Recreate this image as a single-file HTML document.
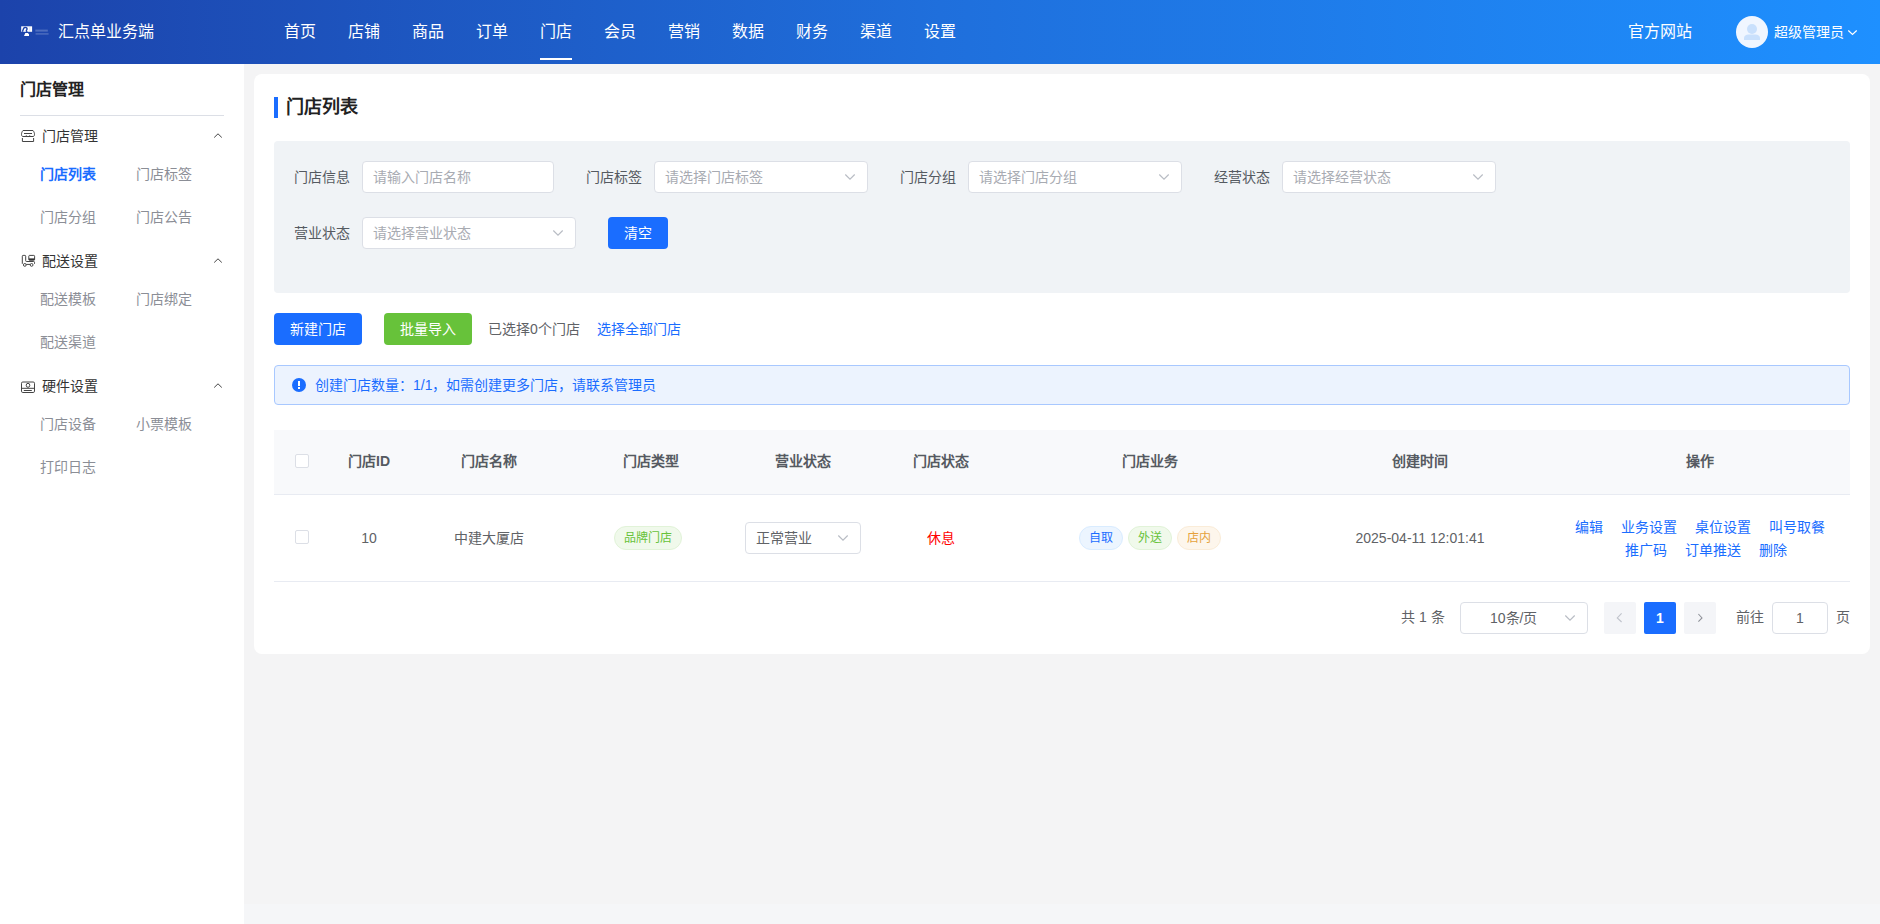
<!DOCTYPE html>
<html lang="zh-CN">
<head>
<meta charset="utf-8">
<style>
*{box-sizing:border-box;margin:0;padding:0;}
html,body{width:1880px;height:924px;overflow:hidden;}
body{font-family:"Liberation Sans",sans-serif;background:#f4f4f5;position:relative;color:#333;font-size:14px;}
.a{position:absolute;white-space:nowrap;}
/* header */
#hd{position:absolute;left:0;top:0;width:1880px;height:64px;background:linear-gradient(90deg,#1c43ab 0%,#1f6fdc 50%,#1e90ff 100%);}
#hd .t{color:#fff;font-size:16px;line-height:20px;}
.nav{top:22px;}
/* sidebar */
#sb{position:absolute;left:0;top:64px;width:244px;height:860px;background:#fff;}
.sbi{font-size:14px;line-height:20px;color:#8b8e96;}
.sbg{font-size:14px;line-height:20px;color:#333;}
/* card */
#card{position:absolute;left:254px;top:74px;width:1616px;height:580px;background:#fff;border-radius:8px;}
.lbl{font-size:14px;line-height:20px;color:#555a61;}
.inp{position:absolute;height:32px;background:#fff;border:1px solid #dcdfe6;border-radius:4px;}
.ph{position:absolute;left:10px;top:5px;font-size:14px;line-height:20px;color:#a8abb2;white-space:nowrap;}
.chev{position:absolute;width:7px;height:7px;border-right:1px solid #a8abb2;border-bottom:1px solid #a8abb2;transform:rotate(45deg);}
.btn{position:absolute;height:32px;border-radius:4px;color:#fff;font-size:14px;line-height:32px;text-align:center;}
.th{font-size:14px;line-height:20px;color:#555a61;font-weight:bold;}
.cb{position:absolute;width:14px;height:14px;border:1px solid #dcdfe6;border-radius:2px;background:#fff;}
.tag{position:absolute;height:24px;border-radius:12px;font-size:12px;line-height:22px;text-align:center;border:1px solid;}
.lnk{color:#1a6dff;font-size:14px;line-height:20px;}
</style>
</head>
<body>
<div id="hd">
  <div class="a t" style="left:58px;top:22px;">汇点单业务端</div>
  <div class="a t nav" style="left:284px;">首页</div>
  <div class="a t nav" style="left:348px;">店铺</div>
  <div class="a t nav" style="left:412px;">商品</div>
  <div class="a t nav" style="left:476px;">订单</div>
  <div class="a t nav" style="left:540px;">门店</div>
  <div class="a" style="left:540px;top:58px;width:32px;height:2px;background:#fff;"></div>
  <div class="a t nav" style="left:604px;">会员</div>
  <div class="a t nav" style="left:668px;">营销</div>
  <div class="a t nav" style="left:732px;">数据</div>
  <div class="a t nav" style="left:796px;">财务</div>
  <div class="a t nav" style="left:860px;">渠道</div>
  <div class="a t nav" style="left:924px;">设置</div>
  <div class="a t nav" style="left:1628px;">官方网站</div>
  <div class="a" style="left:1736px;top:16px;width:32px;height:32px;border-radius:50%;background:#f0f6ff;"></div>
  <div class="a t" style="left:1774px;top:22px;font-size:14px;">超级管理员</div>
</div>

<div class="a" style="left:244px;top:904px;width:1636px;height:20px;background:#f5f6f8;"></div>
<div id="sb">
  <div class="a" style="left:20px;top:15px;font-size:16px;line-height:22px;font-weight:bold;color:#222;">门店管理</div>
  <div class="a" style="left:20px;top:51px;width:204px;height:1px;background:#dcdfe6;"></div>
  <div class="a sbg" style="left:42px;top:62px;">门店管理</div>
  <div class="a sbi" style="left:40px;top:100px;color:#1a6dff;font-weight:bold;">门店列表</div>
  <div class="a sbi" style="left:136px;top:100px;">门店标签</div>
  <div class="a sbi" style="left:40px;top:143px;">门店分组</div>
  <div class="a sbi" style="left:136px;top:143px;">门店公告</div>
  <div class="a sbg" style="left:42px;top:187px;">配送设置</div>
  <div class="a sbi" style="left:40px;top:225px;">配送模板</div>
  <div class="a sbi" style="left:136px;top:225px;">门店绑定</div>
  <div class="a sbi" style="left:40px;top:268px;">配送渠道</div>
  <div class="a sbg" style="left:42px;top:312px;">硬件设置</div>
  <div class="a sbi" style="left:40px;top:350px;">门店设备</div>
  <div class="a sbi" style="left:136px;top:350px;">小票模板</div>
  <div class="a sbi" style="left:40px;top:393px;">打印日志</div>
</div>

<div id="card">
  <div class="a" style="left:20px;top:23px;width:4px;height:21px;background:#1a6dff;"></div>
  <div class="a" style="left:32px;top:20px;font-size:18px;line-height:26px;font-weight:bold;color:#222;">门店列表</div>
  <div class="a" style="left:20px;top:67px;width:1576px;height:152px;background:#f0f3f6;border-radius:4px;"></div>
  <div class="a lbl" style="left:40px;top:93px;">门店信息</div>
  <div class="inp" style="left:108px;top:87px;width:192px;"><span class="ph">请输入门店名称</span></div>
  <div class="a lbl" style="left:332px;top:93px;">门店标签</div>
  <div class="inp" style="left:400px;top:87px;width:214px;"><span class="ph">请选择门店标签</span></div>
  <div class="a lbl" style="left:646px;top:93px;">门店分组</div>
  <div class="inp" style="left:714px;top:87px;width:214px;"><span class="ph">请选择门店分组</span></div>
  <div class="a lbl" style="left:960px;top:93px;">经营状态</div>
  <div class="inp" style="left:1028px;top:87px;width:214px;"><span class="ph">请选择经营状态</span></div>
  <div class="a lbl" style="left:40px;top:149px;">营业状态</div>
  <div class="inp" style="left:108px;top:143px;width:214px;"><span class="ph">请选择营业状态</span></div>
  <div class="btn" style="left:354px;top:143px;width:60px;background:#1a6dff;">清空</div>

  <div class="btn" style="left:20px;top:239px;width:88px;background:#1a6dff;">新建门店</div>
  <div class="btn" style="left:130px;top:239px;width:88px;background:#67c23a;">批量导入</div>
  <div class="a" style="left:234px;top:245px;font-size:14px;line-height:20px;color:#606266;">已选择0个门店</div>
  <div class="a lnk" style="left:343px;top:245px;">选择全部门店</div>

  <div class="a" style="left:20px;top:291px;width:1576px;height:40px;background:#ecf3fe;border:1px solid #a8c8ff;border-radius:4px;"></div>
  <div class="a" style="left:38px;top:304px;width:14px;height:14px;border-radius:50%;background:#1a6dff;"></div>
  <div class="a" style="left:44px;top:307px;width:2px;height:5px;background:#fff;"></div>
  <div class="a" style="left:44px;top:313px;width:2px;height:2px;background:#fff;"></div>
  <div class="a lnk" style="left:61px;top:301px;">创建门店数量：1/1，如需创建更多门店，请联系管理员</div>

  <div class="a" style="left:20px;top:356px;width:1576px;height:65px;background:#f8f9fb;border-bottom:1px solid #e8ebf2;"></div>
  <div class="cb" style="left:41px;top:380px;"></div>
  <div class="a th" style="left:115px;top:377px;transform:translateX(-50%);">门店ID</div>
  <div class="a th" style="left:234.5px;top:377px;transform:translateX(-50%);">门店名称</div>
  <div class="a th" style="left:397px;top:377px;transform:translateX(-50%);">门店类型</div>
  <div class="a th" style="left:549px;top:377px;transform:translateX(-50%);">营业状态</div>
  <div class="a th" style="left:687px;top:377px;transform:translateX(-50%);">门店状态</div>
  <div class="a th" style="left:895.5px;top:377px;transform:translateX(-50%);">门店业务</div>
  <div class="a th" style="left:1166px;top:377px;transform:translateX(-50%);">创建时间</div>
  <div class="a th" style="left:1446px;top:377px;transform:translateX(-50%);">操作</div>

  <div class="a" style="left:20px;top:421px;width:1576px;height:87px;border-bottom:1px solid #e8ebf2;"></div>
  <div class="cb" style="left:41px;top:456px;"></div>
  <div class="a" style="left:115px;top:454px;transform:translateX(-50%);font-size:14px;line-height:20px;color:#606266;">10</div>
  <div class="a" style="left:234.5px;top:454px;transform:translateX(-50%);font-size:14px;line-height:20px;color:#606266;">中建大厦店</div>
  <div class="tag" style="left:360px;top:452px;width:68px;background:#f0f9eb;border-color:#e1f3d8;color:#67c23a;">品牌门店</div>
  <div class="inp" style="left:491px;top:448px;width:116px;"><span class="ph" style="color:#606266;">正常营业</span></div>
  <div class="a" style="left:687px;top:454px;transform:translateX(-50%);font-size:14px;line-height:20px;color:#f00;">休息</div>
  <div class="tag" style="left:825px;top:452px;width:44px;background:#ecf5ff;border-color:#d9ecff;color:#1a6dff;">自取</div>
  <div class="tag" style="left:874px;top:452px;width:44px;background:#f0f9eb;border-color:#e1f3d8;color:#67c23a;">外送</div>
  <div class="tag" style="left:923px;top:452px;width:44px;background:#fdf6ec;border-color:#faecd8;color:#e6a23c;">店内</div>
  <div class="a" style="left:1166px;top:454px;transform:translateX(-50%);font-size:14px;line-height:20px;color:#606266;">2025-04-11 12:01:41</div>
  <div class="a lnk" style="left:1321px;top:443px;">编辑</div>
  <div class="a lnk" style="left:1367px;top:443px;">业务设置</div>
  <div class="a lnk" style="left:1441px;top:443px;">桌位设置</div>
  <div class="a lnk" style="left:1515px;top:443px;">叫号取餐</div>
  <div class="a lnk" style="left:1371px;top:466px;">推广码</div>
  <div class="a lnk" style="left:1431px;top:466px;">订单推送</div>
  <div class="a lnk" style="left:1505px;top:466px;">删除</div>

  <div class="a" style="left:1147px;top:533px;font-size:14px;line-height:20px;color:#606266;">共 1 条</div>
  <div class="inp" style="left:1206px;top:528px;width:128px;"><span class="ph" style="left:29px;color:#606266;">10条/页</span></div>
  <div class="a" style="left:1350px;top:528px;width:32px;height:32px;background:#f4f5f8;border-radius:2px;"></div>
  <div class="a" style="left:1390px;top:528px;width:32px;height:32px;background:#1a6dff;border-radius:2px;color:#fff;font-weight:bold;font-size:14px;line-height:32px;text-align:center;">1</div>
  <div class="a" style="left:1430px;top:528px;width:32px;height:32px;background:#f4f5f8;border-radius:2px;"></div>
  <div class="a" style="left:1482px;top:533px;font-size:14px;line-height:20px;color:#606266;">前往</div>
  <div class="inp" style="left:1518px;top:528px;width:56px;text-align:center;font-size:14px;line-height:30px;color:#606266;">1</div>
  <div class="a" style="left:1582px;top:533px;font-size:14px;line-height:20px;color:#606266;">页</div>
</div>
<svg class="a" style="left:0;top:0;z-index:10;" width="1880" height="924" viewBox="0 0 1880 924" fill="none">
  <!-- logo -->
  <path d="M21.2 26.3 H32.1 V31.8 H21.2 Z" fill="#fff"/>
  <path d="M22.4 31.8 L23.6 28.4 C24.1 27.3 25.6 27.1 26.6 27.9 C27.4 28.6 27 29.7 26.4 30.3 C26.1 30.7 26.5 31.4 27.3 31.8" stroke="#1d43ab" stroke-width="1.4"/>
  <path d="M29.8 27 V31.5" stroke="#c8d2ee" stroke-width=".6"/>
  <path d="M24 35.9 L25.3 33.1 H28.3 V34 H29 V35.9 Z" fill="#fff"/>
  <rect x="35.3" y="29.6" width="12.5" height="2" fill="#fff" opacity=".22"/>
  <rect x="35.6" y="33.1" width="13" height="1.6" fill="#fff" opacity=".2"/>
  <!-- avatar -->
  <circle cx="1752" cy="29" r="5" fill="#c9e0fc"/>
  <path d="M1744 40 V38 C1744 35.8 1746 34.5 1748.5 34.5 H1755.5 C1758 34.5 1760 35.8 1760 38 V40 Z" fill="#c9e0fc"/>
  <polyline points="1848.3,30.5 1852.5,34.5 1856.7,30.5" stroke="#fff" stroke-width="1.2"/>
  <!-- sidebar icons -->
  <g stroke="#444" stroke-width="1">
    <path d="M23 130.5 H33 C33.9 131.5 34.5 133 34.5 134.3 C34.5 135.6 34 136.5 33.2 136.5 H22.8 C22 136.5 21.5 135.6 21.5 134.3 C21.5 133 22.1 131.5 23 130.5 Z"/>
    <path d="M24 133.5 H32"/>
    <path d="M25.2 136.5 Q26.3 135 27.4 136.5 M28.6 136.5 Q29.7 135 30.8 136.5" stroke-width=".9"/>
    <path d="M22.4 138 V141.5 H33.6 V138"/>
    <polyline points="214.2,137.5 218,133.8 221.8,137.5"/>
    <path d="M22.3 263.8 V256.2 Q22.3 255.4 23.1 255.4 H24.9 Q25.7 255.4 25.7 256.2 V260.7 Q25.7 261.5 26.5 261.5 H33.7 Q34.5 261.5 34.5 262.3 V263.8"/>
    <rect x="28.8" y="255.4" width="5.8" height="4.8" rx=".8"/>
    <rect x="28.8" y="258.4" width="5.8" height="1.8" fill="#333" stroke="none"/>
    <circle cx="24.8" cy="264.9" r="1.4"/>
    <circle cx="31.6" cy="264.9" r="1.4"/>
    <path d="M26.2 264.4 H30.2"/>
    <polyline points="214.2,262.5 218,258.8 221.8,262.5"/>
    <rect x="21.5" y="382" width="13" height="10.5" rx="1.3"/>
    <ellipse cx="28" cy="385.3" rx="1.8" ry="2"/>
    <path d="M21.5 388.3 H34.5"/>
    <path d="M23.8 390.5 H31.8"/>
    <polyline points="214.2,387.5 218,383.8 221.8,387.5"/>
  </g>
  <!-- select chevrons -->
  <g stroke="#b8bcc4" stroke-width="1.15">
    <polyline points="845.3,174.5 850,179.2 854.7,174.5"/>
    <polyline points="1159.3,174.5 1164,179.2 1168.7,174.5"/>
    <polyline points="1473.3,174.5 1478,179.2 1482.7,174.5"/>
    <polyline points="553.3,230.5 558,235.2 562.7,230.5"/>
    <polyline points="838.3,535.5 843,540.2 847.7,535.5"/>
    <polyline points="1565.3,615.5 1570,620.2 1574.7,615.5"/>
    <polyline points="1621.6,613.4 1617.3,617.9 1621.6,622" stroke="#c0c4cc"/>
    <polyline points="1698.4,614 1702,617.9 1698.4,621.7" stroke="#8e9198" stroke-width="1.05"/>
  </g>
</svg>
</body>
</html>
